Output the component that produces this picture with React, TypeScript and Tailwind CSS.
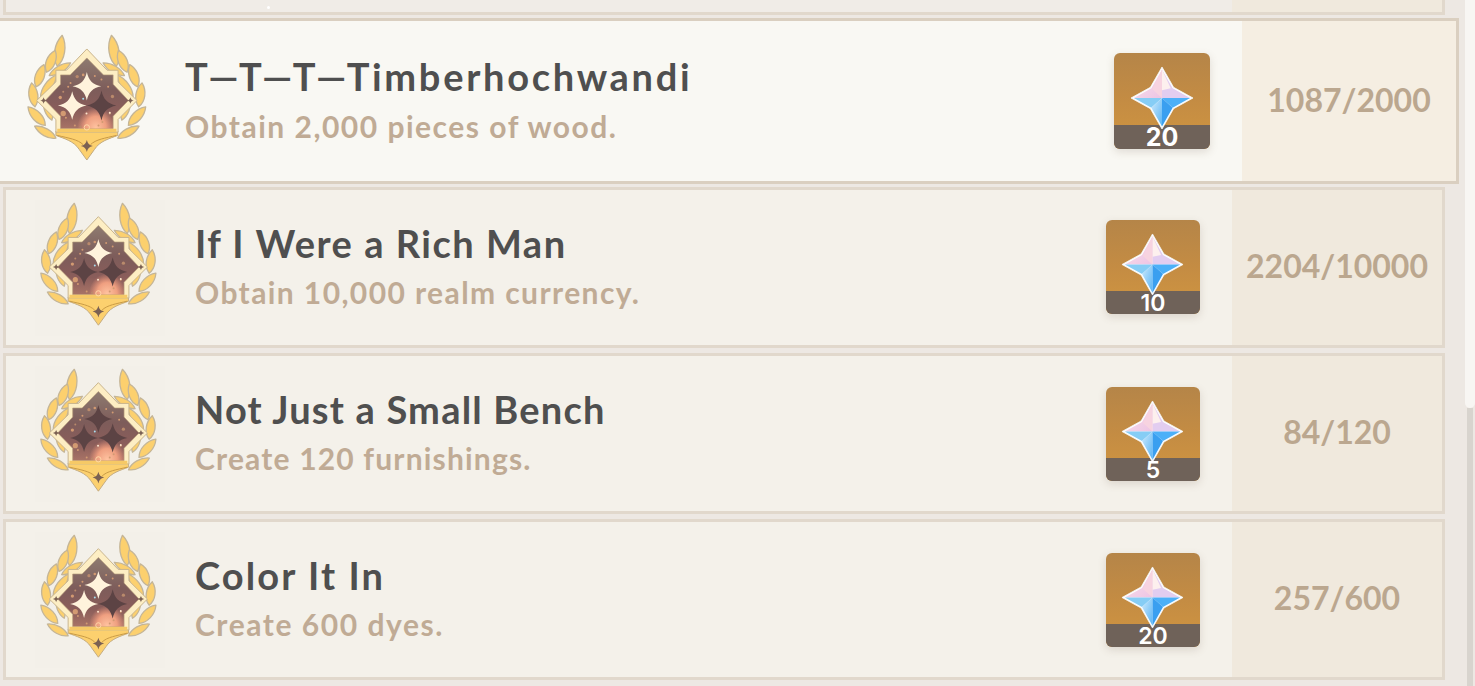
import React from "react";

function Star({ x, y, r, fill }: { x: number; y: number; r: number; fill: string }) {
  const a = r * 0.13;
  const b = r * 0.4;
  const d = `M${x} ${y - r} C${x + a} ${y - b} ${x + b} ${y - a} ${x + r} ${y} C${x + b} ${y + a} ${x + a} ${y + b} ${x} ${y + r} C${x - a} ${y + b} ${x - b} ${y + a} ${x - r} ${y} C${x - b} ${y - a} ${x - a} ${y - b} ${x} ${y - r}Z`;
  return <path d={d} fill={fill} />;
}

function leaf(x1: number, y1: number, x2: number, y2: number, w: number) {
  const dx = x2 - x1;
  const dy = y2 - y1;
  const len = Math.hypot(dx, dy);
  const nx = (-dy / len) * w;
  const ny = (dx / len) * w;
  const p = (t: number, s: number) => `${x1 + dx * t + nx * s} ${y1 + dy * t + ny * s}`;
  return `M${x1} ${y1} C${p(0.3, 1)} ${p(0.75, 1)} ${x2} ${y2} C${p(0.75, -1)} ${p(0.3, -1)} ${x1} ${y1}Z`;
}

const leaves: [number, number, number, number, number][] = [
  [132, 298, 156, 362, 14],
  [170, 226, 122, 292, 15],
  [212, 190, 148, 228, 14],
  [187, 107, 172, 200, 20],
  [166, 152, 140, 218, 18],
  [132, 195, 108, 262, 18],
  [95, 250, 105, 322, 18],
  [84, 322, 136, 378, 18],
  [104, 380, 168, 416, 15],
];

function LaurelSide() {
  return (
    <g fill="#fcd06e" stroke="#c4b597" strokeWidth="4" strokeLinejoin="round">
      {leaves.map((l, i) => (
        <path key={i} d={leaf(l[0], l[1], l[2], l[3], l[4])} />
      ))}
    </g>
  );
}

function Medal({ id, lit }: { id: string; lit: [boolean, boolean, boolean] }) {
  const on = "#fff3dc";
  const off = "#5c4344";
  const frame = "M261 148 L322 212 L355 212 L355 247 L412 303 L355 360 L355 398 L168 398 L168 360 L110 303 L168 247 L168 212 L200 212Z";
  const inner = "M261 175 L311 226 L340 226 L340 254 L386 303 L340 350 L340 388 L182 388 L182 350 L136 303 L182 254 L182 226 L211 226Z";
  const dots: [number, number, number][] = [
    [212, 250, 3], [232, 231, 5], [250, 226, 4], [285, 229, 3], [305, 240, 3], [325, 262, 3],
    [338, 291, 5], [181, 294, 5], [190, 342, 8], [198, 355, 3], [225, 378, 3], [242, 382, 3],
    [296, 378, 3], [308, 368, 3], [330, 342, 3], [205, 262, 3], [190, 277, 3],
  ];
  return (
    <svg viewBox="66 97 400 418" className="w-full h-full">
      <defs>
        <linearGradient id={id} x1="0" y1="0" x2="0" y2="1">
          <stop offset="0" stopColor="#8e7b70" />
          <stop offset="0.45" stopColor="#7d5c5a" />
          <stop offset="0.75" stopColor="#8a5d5a" />
          <stop offset="1" stopColor="#a87366" />
        </linearGradient>
        <radialGradient id={`${id}g`} cx="0.5" cy="0.5" r="0.5">
          <stop offset="0" stopColor="#ffc3a0" />
          <stop offset="0.55" stopColor="#ef9f80" />
          <stop offset="1" stopColor="#e89078" stopOpacity="0" />
        </radialGradient>
        <clipPath id={`${id}c`}>
          <path d={inner} />
        </clipPath>
      </defs>
      <LaurelSide />
      <g transform="translate(522 0) scale(-1 1)">
        <LaurelSide />
      </g>
      <path
        d="M168 395 L354 395 L354 408 C328 418 300 425 284 450 L261 482 L238 450 C222 425 194 418 168 408Z"
        fill="#fcd06e"
        stroke="#c2ab82"
        strokeWidth="3"
        strokeLinejoin="round"
      />
      <path d="M172 408 C205 416 235 420 250 436 M350 408 C317 416 287 420 272 436" fill="none" stroke="#c99a45" strokeWidth="3" />
      <path d={frame} fill="#fdeec4" stroke="#c9b48c" strokeWidth="3" strokeLinejoin="round" />
      <path d={inner} fill={`url(#${id})`} stroke="#b59a78" strokeWidth="2" strokeLinejoin="round" />
      <g clipPath={`url(#${id}c)`}>
        <ellipse cx="288" cy="385" rx="56" ry="62" fill={`url(#${id}g)`} />
      </g>
      <path d="M172 388 L350 388 L350 398 L172 398Z" fill="#f6c966" />
      {dots.map(([x, y, r], i) => (
        <circle key={i} cx={x} cy={y} r={r} fill={i % 5 === 1 ? "#b98a6c" : "#d29a72"} />
      ))}
      <circle cx="261" cy="384" r="8" fill="none" stroke="#ffd7a8" strokeWidth="3" />
      <circle cx="250" cy="298" r="3" fill="#a9dff0" />
      <circle cx="260" cy="342" r="3" fill="#ffe6cf" />
      <circle cx="330" cy="340" r="3" fill="#ffe6cf" />
      <Star x={261} y={260} r={43} fill={lit[0] ? on : off} />
      <Star x={217} y={318} r={43} fill={lit[1] ? on : off} />
      <Star x={305} y={318} r={45} fill={lit[2] ? on : off} />
      <Star x={131} y={303} r={10} fill="#7b6153" />
      <Star x={392} y={303} r={10} fill="#7b6153" />
      <Star x={261} y={440} r={18} fill="#7b6153" />
    </svg>
  );
}

function Gem({ id }: { id: string }) {
  return (
    <svg viewBox="0 0 66 66" className="w-full h-full">
      <defs>
        <linearGradient id={`${id}a`} x1="0" y1="0" x2="1" y2="1">
          <stop offset="0" stopColor="#fbe2ea" />
          <stop offset="1" stopColor="#edc4e4" />
        </linearGradient>
        <linearGradient id={`${id}b`} x1="0" y1="0" x2="1" y2="1">
          <stop offset="0" stopColor="#cfeafb" />
          <stop offset="1" stopColor="#58b4f5" />
        </linearGradient>
      </defs>
      <path d="M33 1 L45 22 L65 33 L45 44 L33 65 L21 44 L1 33 L21 22Z" fill="#fff" stroke="#f4f8fb" strokeWidth="0.8" strokeLinejoin="round" />
      <path d="M33 3.5 L33 33 L4 33 L22 23Z" fill={`url(#${id}a)`} />
      <path d="M33 3.5 L33 33 L62 33 L44 23Z" fill="#e2cdf0" />
      <path d="M33 3.5 L33 25 L42 23Z" fill="#fdf0ee" />
      <path d="M33 3.5 L23 24 L33 33Z" fill="#f7d3e0" />
      <path d="M4 33 L33 33 L22 43Z" fill="#86cdf5" />
      <path d="M62 33 L33 33 L44 43Z" fill="#4cb0f8" />
      <path d="M22 43 L33 33 L33 62.5Z" fill={`url(#${id}b)`} />
      <path d="M44 43 L33 33 L33 62.5Z" fill="#3a9ff0" />
    </svg>
  );
}

function Reward({ n, id, big, up }: { n: number; id: string; big?: boolean; up?: boolean }) {
  return (
    <div
      className={`relative shrink-0 flex flex-col rounded-md bg-gradient-to-b from-[#b58548] via-[#c48c43] to-[#d19640] shadow-[0_3px_8px_rgba(110,90,70,0.18)] ${
        big ? "w-[96px] h-[96px]" : "w-[94px] h-[94px]"
      } ${up ? "mb-[1px]" : ""}`}
    >
      <div className="flex-1" />
      <div className={`bg-[#6f6259] rounded-b-md ${big ? "h-[24px]" : "h-[23px]"}`} />
      <div className={`absolute ${big ? "left-[16px] top-[13px] w-[64px] h-[64px]" : "left-[15px] top-[13px] w-[63px] h-[63px]"}`}>
        <Gem id={id} />
      </div>
      <div
        className={`absolute left-0 right-0 text-center text-white [font-family:Inter,sans-serif] ${
          big ? "bottom-0 text-[25px] leading-[24px] font-bold" : "-bottom-[1px] text-[23px] leading-[23px] font-semibold"
        }`}
      >
        {n}
      </div>
    </div>
  );
}

type R = {
  title: string;
  sub: string;
  n: number;
  count: string;
  lit: [boolean, boolean, boolean];
  tt: string;
  st: string;
};

const rows: R[] = [
  { title: "If I Were a Rich Man", sub: "Obtain 10,000 realm currency.", n: 10, count: "2204/10000", lit: [true, false, false], tt: "tracking-[1.5px]", st: "tracking-[1.4px]" },
  { title: "Not Just a Small Bench", sub: "Create 120 furnishings.", n: 5, count: "84/120", lit: [false, false, false], tt: "tracking-[1.2px]", st: "tracking-[1.17px]" },
  { title: "Color It In", sub: "Create 600 dyes.", n: 20, count: "257/600", lit: [true, true, false], tt: "tracking-[2.1px]", st: "tracking-[1.55px]" },
];

function Row({ r, i }: { r: R; i: number }) {
  return (
    <div className="ml-[3px] w-[1442px] h-[161px] shrink-0 flex border-[3px] border-[#e1d8cc] bg-[#f4f1ea]">
      <div className="flex-1 flex items-center pl-[29px] pr-[32px]">
        <div className="w-[130px] h-[136px] shrink-0 bg-[#f3f0e9]">
          <Medal id={`m${i}`} lit={r.lit} />
        </div>
        <div className="flex-1 ml-[30px] flex flex-col gap-[10px] pb-[3px]">
          <div className={`text-[38px] leading-[42px] font-bold text-[#4f4f4f] ${r.tt}`}>{r.title}</div>
          <div className={`text-[30px] leading-[36px] font-bold text-[#c0ab95] ${r.st}`}>{r.sub}</div>
        </div>
        <Reward n={r.n} id={`g${i}`} up={i === 0} />
      </div>
      <div className="w-[210px] shrink-0 bg-[#f0e9dd] flex items-center justify-center pb-[3px] text-[32px] font-bold text-[#bba78f]">
        {r.count}
      </div>
    </div>
  );
}

export default function App() {
  return (
    <div className="relative w-[1475px] h-[686px] overflow-hidden bg-[#ede8e3] flex flex-col [font-family:Lato,sans-serif]">
      <div className="ml-[3px] w-[1442px] h-[15px] shrink-0 flex border-x-[3px] border-b-[3px] border-[#e1d8cc] bg-[#f0ece7]">
        <div className="flex-1" />
        <div className="w-[210px] bg-[#f0e9dd]" />
      </div>
      <div className="mt-[3px] w-[1459px] h-[166px] shrink-0 flex border-[3px] border-l-0 border-[#dacfc0] bg-[#f9f8f3]">
        <div className="flex-1 flex items-center pl-[22px] pr-[32px]">
          <div className="w-[133px] h-[139px] shrink-0">
            <Medal id="m" lit={[true, true, false]} />
          </div>
          <div className="flex-1 ml-[30px] flex flex-col gap-[11px] pb-[4px]">
            <div className="text-[38px] leading-[42px] font-bold text-[#4f4f4f] tracking-[2.7px]">T—T—T—Timberhochwandi</div>
            <div className="text-[30px] leading-[36px] font-bold text-[#c0ab95] tracking-[1.5px]">Obtain 2,000 pieces of wood.</div>
          </div>
          <Reward n={20} id="g" big />
        </div>
        <div className="w-[214px] shrink-0 bg-[#f5eee2] flex items-center justify-center pb-[3px] text-[32px] font-bold text-[#bba78f]">
          1087/2000
        </div>
      </div>
      <div className="mt-[3px] flex flex-col gap-[5px]">
        {rows.map((r, i) => (
          <Row key={i} r={r} i={i} />
        ))}
      </div>
      <div className="absolute right-0 top-0 bottom-0 w-[10px] flex flex-col">
        <div className="h-[408px] bg-[#f8f6f3] rounded-b-[5px]" />
        <div className="flex-1 ml-[2px] w-[6px] bg-[#d8d4ce]" />
      </div>
      <div className="absolute left-[267px] top-[6px] w-[3px] h-[3px] rounded-full bg-white" />
    </div>
  );
}
